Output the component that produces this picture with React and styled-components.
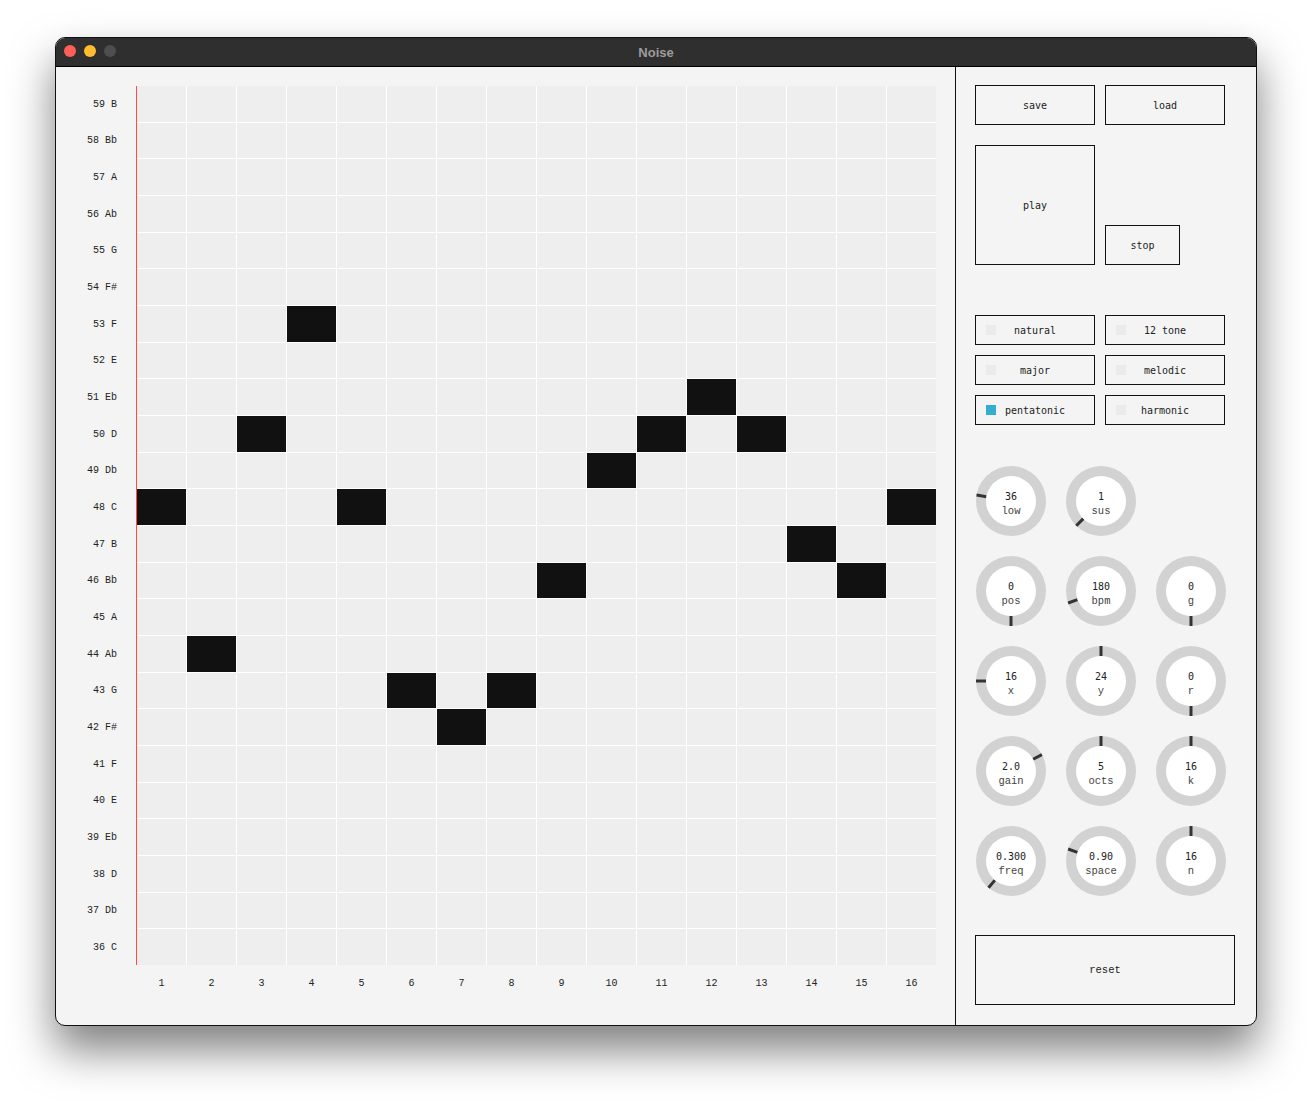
import React from 'react';
import styled, { createGlobalStyle } from 'styled-components';

const NAMES = ['C', 'Db', 'D', 'Eb', 'E', 'F', 'F#', 'G', 'Ab', 'A', 'Bb', 'B'];
const HIGH = 59;
const LOW = 36;
const PITCHES = Array.from({ length: HIGH - LOW + 1 }, (_, i) => HIGH - i);
const SEQUENCE = [48, 44, 50, 53, 48, 43, 42, 43, 46, 49, 50, 51, 50, 47, 46, 48];

const SCALES = [
    { name: 'natural', on: false },
    { name: '12 tone', on: false },
    { name: 'major', on: false },
    { name: 'melodic', on: false },
    { name: 'pentatonic', on: true },
    { name: 'harmonic', on: false },
];

// angle is clockwise from the bottom of the dial
const KNOBS = [
    { value: '36', label: 'low', angle: 100 },
    { value: '1', label: 'sus', angle: 45 },
    null,
    { value: '0', label: 'pos', angle: 0 },
    { value: '180', label: 'bpm', angle: 70 },
    { value: '0', label: 'g', angle: 0 },
    { value: '16', label: 'x', angle: 90 },
    { value: '24', label: 'y', angle: 180 },
    { value: '0', label: 'r', angle: 0 },
    { value: '2.0', label: 'gain', angle: 242 },
    { value: '5', label: 'octs', angle: 180 },
    { value: '16', label: 'k', angle: 180 },
    { value: '0.300', label: 'freq', angle: 40 },
    { value: '0.90', label: 'space', angle: 110 },
    { value: '16', label: 'n', angle: 180 },
];

const Knob = ({ value, label, angle }) => (
    <Dial>
        <Tick viewBox="0 0 70 70">
            <line x1="35" y1="60" x2="35" y2="70" stroke="#333" strokeWidth="3" transform={`rotate(${angle} 35 35)`} />
        </Tick>
        <Face>
            <KnobValue>{value}</KnobValue>
            <KnobLabel>{label}</KnobLabel>
        </Face>
    </Dial>
);

const App = () => {
    return (
        <>
            <GlobalStyle />
            <Page>
                <Window>
                    <TitleBar>
                        <Lights>
                            <Light color="#ff5f57" />
                            <Light color="#febc2e" />
                            <Light color="#4e4e4e" />
                        </Lights>
                        <Title>Noise</Title>
                    </TitleBar>
                    <Body>
                        <SequencerPanel>
                            <GridRow>
                                <RowLabels>
                                    {PITCHES.map((p) => (
                                        <RowLabel key={p}>{`${p} ${NAMES[p % 12]}`}</RowLabel>
                                    ))}
                                </RowLabels>
                                <Grid>
                                    {PITCHES.map((p) =>
                                        SEQUENCE.map((note, col) => (
                                            <Cell key={`${p}-${col}`} active={note === p} />
                                        ))
                                    )}
                                </Grid>
                            </GridRow>
                            <ColLabels>
                                {SEQUENCE.map((_, i) => (
                                    <ColLabel key={i}>{i + 1}</ColLabel>
                                ))}
                            </ColLabels>
                        </SequencerPanel>
                        <ControlPanel>
                            <ButtonRow>
                                <Button w={120} h={40}>save</Button>
                                <Button w={120} h={40}>load</Button>
                            </ButtonRow>
                            <TransportRow>
                                <Button w={120} h={120}>play</Button>
                                <Button w={75} h={40}>stop</Button>
                            </TransportRow>
                            <ScaleGrid>
                                {SCALES.map((s) => (
                                    <ScaleBox key={s.name}>
                                        <Check on={s.on} />
                                        <ScaleName>{s.name}</ScaleName>
                                    </ScaleBox>
                                ))}
                            </ScaleGrid>
                            <KnobGrid>
                                {KNOBS.map((k, i) => (k ? <Knob key={i} {...k} /> : <span key={i} />))}
                            </KnobGrid>
                            <ResetButton>reset</ResetButton>
                        </ControlPanel>
                    </Body>
                </Window>
            </Page>
        </>
    );
};

const GlobalStyle = createGlobalStyle`
    html, body {
        margin: 0;
        padding: 0;
        background: #ffffff;
    }
    * {
        box-sizing: border-box;
    }
`;

const Page = styled.div`
    min-height: 1100px;
    padding-top: 37px;
`;

const Window = styled.div`
    width: 1202px;
    height: 989px;
    margin: 0 auto;
    border: 1px solid #111;
    border-radius: 10px;
    overflow: hidden;
    background: #f4f4f4;
    box-shadow: 0 24px 44px rgba(0, 0, 0, 0.5);
    display: flex;
    flex-direction: column;
`;

const TitleBar = styled.div`
    height: 29px;
    flex-shrink: 0;
    background: #2f2f2f;
    border-bottom: 1px solid #000;
    display: flex;
    align-items: center;
    justify-content: center;
    position: relative;
`;

const Lights = styled.div`
    position: absolute;
    left: 8px;
    top: 7px;
    display: flex;
    gap: 8px;
`;

const Light = styled.span`
    width: 12px;
    height: 12px;
    border-radius: 50%;
    background: ${(p) => p.color};
`;

const Title = styled.div`
    font-family: 'Liberation Sans', Arial, sans-serif;
    font-weight: 700;
    font-size: 13px;
    color: #9c9c9c;
`;

const Body = styled.div`
    flex: 1;
    display: flex;
`;

const SequencerPanel = styled.div`
    width: 900px;
    border-right: 1px solid #111;
    padding-top: 19px;
`;

const GridRow = styled.div`
    display: flex;
`;

const RowLabels = styled.div`
    width: 80px;
    height: 879px;
    padding-right: 19px;
    display: grid;
    grid-template-rows: repeat(24, 1fr);
    row-gap: 1px;
`;

const RowLabel = styled.div`
    display: flex;
    align-items: center;
    justify-content: flex-end;
    padding-top: 1px;
    font-family: 'Liberation Mono', 'Courier New', monospace;
    font-size: 10px;
    color: #222;
    white-space: pre;
`;

const Grid = styled.div`
    width: 800px;
    height: 879px;
    border-left: 1px solid #ff4a4a;
    background: #ffffff;
    display: grid;
    grid-template-columns: repeat(16, 49px);
    grid-template-rows: repeat(24, 1fr);
    gap: 1px;
`;

const Cell = styled.div`
    background: ${(p) => (p.active ? '#111111' : '#eeeeee')};
`;

const ColLabels = styled.div`
    margin: 12px 0 0 81px;
    display: grid;
    grid-template-columns: repeat(16, 49px);
    column-gap: 1px;
`;

const ColLabel = styled.div`
    text-align: center;
    font-family: 'Liberation Mono', 'Courier New', monospace;
    font-size: 10px;
    line-height: 14px;
    color: #222;
`;

const ControlPanel = styled.div`
    width: 300px;
    padding: 18px 0 0 19px;
    display: flex;
    flex-direction: column;
`;

const ButtonRow = styled.div`
    display: flex;
    gap: 10px;
`;

const TransportRow = styled.div`
    display: flex;
    align-items: flex-end;
    gap: 10px;
    margin-top: 20px;
`;

const Button = styled.div`
    width: ${(p) => p.w}px;
    height: ${(p) => p.h}px;
    border: 1px solid #111;
    display: flex;
    align-items: center;
    justify-content: center;
    font-family: 'DejaVu Sans Mono', monospace;
    font-size: 10px;
    color: #222;
`;

const ScaleGrid = styled.div`
    margin-top: 50px;
    display: grid;
    grid-template-columns: repeat(2, 120px);
    grid-auto-rows: 30px;
    gap: 10px;
`;

const ScaleBox = styled.div`
    border: 1px solid #111;
    padding: 0 10px;
    display: grid;
    grid-template-columns: 10px 1fr 10px;
    align-items: center;
`;

const Check = styled.span`
    width: 10px;
    height: 10px;
    background: ${(p) => (p.on ? '#33aed0' : '#ebebeb')};
`;

const ScaleName = styled.span`
    text-align: center;
    font-family: 'DejaVu Sans Mono', monospace;
    font-size: 10px;
    color: #222;
`;

const KnobGrid = styled.div`
    margin: 41px 0 0 1px;
    display: grid;
    grid-template-columns: repeat(3, 70px);
    grid-auto-rows: 70px;
    gap: 20px;
`;

const Dial = styled.div`
    width: 70px;
    height: 70px;
    border-radius: 50%;
    background: #d2d2d2;
    display: flex;
    align-items: center;
    justify-content: center;
    position: relative;
`;

const Tick = styled.svg`
    position: absolute;
    inset: 0;
    width: 70px;
    height: 70px;
`;

const Face = styled.div`
    width: 50px;
    height: 50px;
    border-radius: 50%;
    background: #ffffff;
    display: flex;
    flex-direction: column;
    align-items: center;
    justify-content: center;
    padding-top: 5px;
    position: relative;
`;

const KnobValue = styled.div`
    font-family: 'DejaVu Sans Mono', monospace;
    font-size: 10px;
    line-height: 15px;
    color: #222;
`;

const KnobLabel = styled.div`
    font-family: 'Liberation Mono', 'Courier New', monospace;
    font-size: 10.5px;
    line-height: 15px;
    color: #444;
`;

const ResetButton = styled.div`
    margin-top: 39px;
    width: 260px;
    height: 70px;
    border: 1px solid #111;
    display: flex;
    align-items: center;
    justify-content: center;
    font-family: 'Liberation Mono', 'Courier New', monospace;
    font-size: 10.5px;
    color: #222;
`;

export default App;
